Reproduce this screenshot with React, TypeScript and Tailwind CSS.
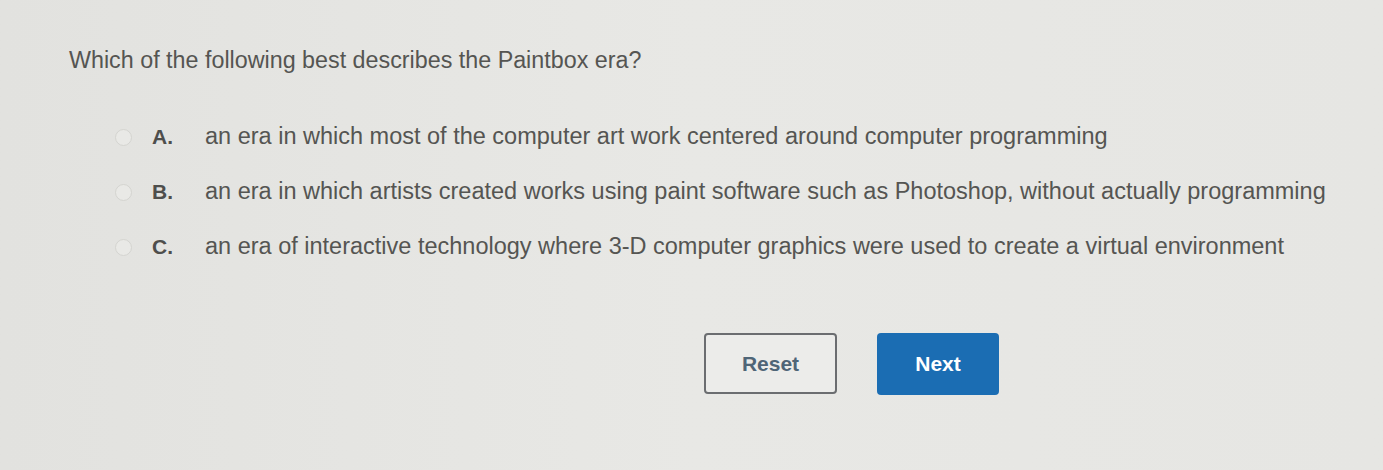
import React from 'react';

const options = [
  { key: 'A.', text: 'an era in which most of the computer art work centered around computer programming' },
  { key: 'B.', text: 'an era in which artists created works using paint software such as Photoshop, without actually programming' },
  { key: 'C.', text: 'an era of interactive technology where 3-D computer graphics were used to create a virtual environment' },
];

export default function App() {
  return (
    <div
      className="w-[1383px] h-[470px] overflow-hidden bg-gradient-to-r from-[#e2e2df] via-[#e8e8e5] to-[#e6e6e3] text-[#555552]"
      style={{ fontFamily: '"Liberation Sans", Arial, sans-serif' }}
    >
      <div className="pt-[45px] pl-[69px]">
        <p className="text-[23.3px] leading-[30px]">Which of the following best describes the Paintbox era?</p>

        <div className="mt-[48px] pl-[46px] flex flex-col gap-[27px]">
          {options.map((o) => (
            <div key={o.key} className="flex items-center h-[28px]">
              <span className="w-[17px] h-[17px] rounded-full border border-[#d4d4d0] bg-[#e9e9e6]" />
              <span className="ml-[20px] w-[53px] text-[21px] font-bold text-[#4e4e4c]">{o.key}</span>
              <span className="text-[23.5px]">{o.text}</span>
            </div>
          ))}
        </div>

        <div className="mt-[72px] pl-[635px] flex gap-[40px]">
          <button className="w-[133px] h-[61px] rounded-[4px] border-2 border-[#6b6d70] bg-[#ececea] text-[21px] font-bold text-[#4f6577]">
            Reset
          </button>
          <button className="w-[122px] h-[62px] rounded-[4px] bg-[#1b6db3] text-[21px] font-bold text-white">
            Next
          </button>
        </div>
      </div>
    </div>
  );
}
